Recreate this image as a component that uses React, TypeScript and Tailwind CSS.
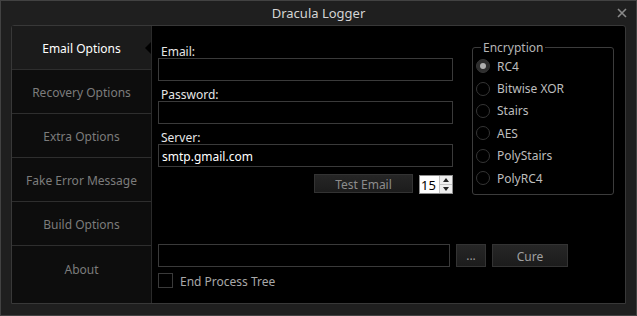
import { useState } from "react";

const tabs = [
  "Email Options",
  "Recovery Options",
  "Extra Options",
  "Fake Error Message",
  "Build Options",
  "About",
];

const methods = ["RC4", "Bitwise XOR", "Stairs", "AES", "PolyStairs", "PolyRC4"];

const Field = ({ label, value }: { label: string; value?: string }) => (
  <div className="flex flex-col">
    <p className="h-[17px] pl-[3px] pt-[2px] text-[12px] leading-[17px] text-[#e6e6e6]">
      {label}
    </p>
    <div className="h-[23px] border border-[#3a3a3a] bg-black px-[3px] pt-[1px] text-[12px] leading-[21px] text-white">
      {value}
    </div>
  </div>
);

const App = () => {
  const [active, setActive] = useState(0);
  const [method, setMethod] = useState(0);
  const [count, setCount] = useState(15);

  return (
    <div
      className="flex h-[316px] w-[637px] flex-col border border-[#424242] bg-[#1f1f1f]"
      style={{ fontFamily: '"Noto Sans", "DejaVu Sans", sans-serif' }}
    >
      {/* title bar */}
      <div className="relative flex h-[24px] items-center justify-center pt-[2px] text-[13px] text-[#d4d4d4]">
        Dracula Logger
        <svg
          className="absolute right-[9px] top-[7px]"
          width="10"
          height="10"
          viewBox="0 0 10 10"
        >
          <path d="M1 1L9 9M9 1L1 9" stroke="#8a8a8a" strokeWidth="1.6" />
        </svg>
      </div>

      <div className="mx-[10px] flex h-[279px] rounded-t-[3px] border border-[#383838] bg-black">
        {/* sidebar */}
        <div className="flex w-[140px] flex-col border-r border-[#2a2a2a] bg-[#0d0d0d]">
          {tabs.map((t, i) => (
            <button
              key={t}
              onClick={() => setActive(i)}
              className={`relative flex h-[44px] shrink-0 items-center justify-center pt-[3px] text-[12px] ${
                i < tabs.length - 1 ? "border-b border-[#2e2e2e]" : ""
              } ${i === active ? "bg-[#1b1b1b] text-white" : "text-[#7c7c7c]"}`}
            >
              {t}
              {i === active && (
                <span className="absolute right-0 top-1/2 -translate-y-1/2 border-y-[6px] border-r-[6px] border-y-transparent border-r-black" />
              )}
            </button>
          ))}
        </div>

        {/* content */}
        <div className="flex flex-1 flex-col pl-[6px] pr-[11px]">
          <div className="flex gap-[19px]">
            <div className="flex w-[295px] flex-col gap-[3px] pt-[15px]">
              <Field label="Email:" />
              <Field label="Password:" />
              <Field label="Server:" value="smtp.gmail.com" />
              <div className="mt-[4px] flex items-start justify-end gap-[6px]">
                <button className="h-[19px] w-[99px] border border-[#333] bg-gradient-to-b from-[#262626] to-[#1c1c1c] pt-[1px] text-[12px] leading-[17px] text-[#8c8c8c]">
                  Test Email
                </button>
                <div className="mt-[1px] flex h-[19px] w-[34px] border border-[#8f8f8f] bg-white">
                  <span className="flex-1 pl-[1px] pt-[1px] text-[13px] leading-[17px] text-black">
                    {count}
                  </span>
                  <div className="flex w-[13px] flex-col border-l border-[#c4c4c4] bg-[#eeeeee]">
                    <button
                      onClick={() => setCount(count + 1)}
                      className="flex flex-1 items-center justify-center border-b border-[#c4c4c4]"
                    >
                      <span className="border-x-[3px] border-b-[4px] border-x-transparent border-b-[#222]" />
                    </button>
                    <button
                      onClick={() => setCount(count - 1)}
                      className="flex flex-1 items-center justify-center"
                    >
                      <span className="border-x-[3px] border-t-[4px] border-x-transparent border-t-[#222]" />
                    </button>
                  </div>
                </div>
              </div>
            </div>

            {/* encryption group */}
            <div className="relative mt-[21px] h-[148px] flex-1 rounded-[3px] border border-[#3c3c3c] pl-[3px] pt-[7px]">
              <span className="absolute -top-[8px] left-[8px] bg-black px-[2px] text-[12px] leading-[16px] text-[#b4b4b4]">
                Encryption
              </span>
              {methods.map((m, i) => (
                <button
                  key={m}
                  onClick={() => setMethod(i)}
                  className="flex h-[22.4px] items-center gap-[7px] text-[12px] text-[#bdbdbd]"
                >
                  <span
                    className={`flex h-[14px] w-[14px] items-center justify-center rounded-full border border-[#353535] ${
                      method === i ? "bg-[#2e2e2e]" : ""
                    }`}
                  >
                    {method === i && (
                      <span className="h-[6px] w-[6px] rounded-full bg-[#b0b0b0]" />
                    )}
                  </span>
                  <span className="pt-[1px]">{m}</span>
                </button>
              ))}
            </div>
          </div>

          {/* bottom */}
          <div className="mt-auto flex flex-col gap-[6px] pb-[15px]">
            <div className="flex items-center gap-[6px]">
              <div className="h-[23px] w-[292px] border border-[#3a3a3a] bg-black" />
              <button className="h-[23px] w-[30px] border border-[#333] bg-gradient-to-b from-[#262626] to-[#1c1c1c] text-[12px] leading-[19px] text-[#9a9a9a]">
                ...
              </button>
              <button className="h-[23px] w-[76px] border border-[#333] bg-gradient-to-b from-[#262626] to-[#1c1c1c] pt-[1px] text-[12px] leading-[19px] text-[#a0a0a0]">
                Cure
              </button>
            </div>
            <label className="flex h-[15px] items-center gap-[7px] text-[12px] leading-[15px] text-[#a8a8a8]">
              <span className="h-[15px] w-[15px] border border-[#3a3a3a]" />
              <span className="pt-[1px]">End Process Tree</span>
            </label>
          </div>
        </div>
      </div>
    </div>
  );
};

export default App;
